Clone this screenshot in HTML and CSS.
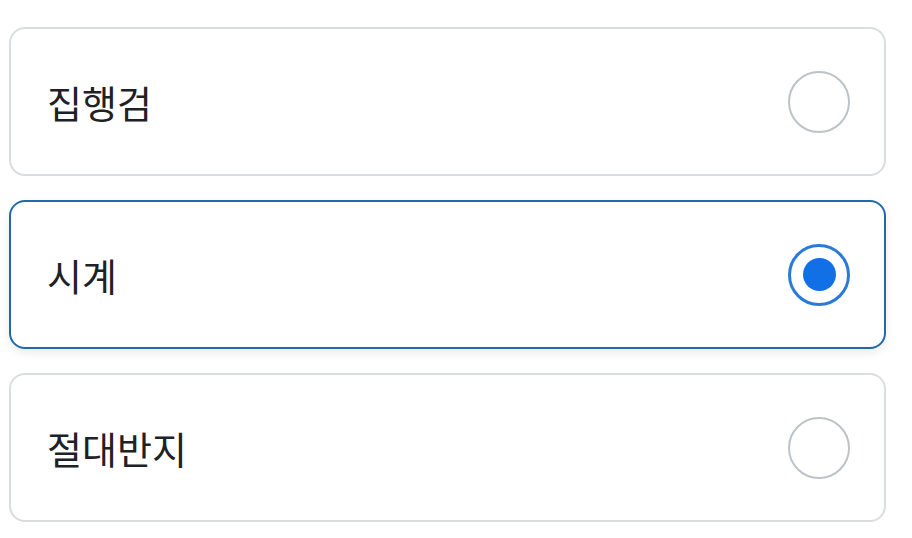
FILE: index.html
```html
<!DOCTYPE html>
<html lang="ko">
<head>
    <meta charset="UTF-8">
    <meta name="viewport" content="width=device-width, initial-scale=1.0">
    <title>선택</title>
    <link rel="stylesheet" href="styles.css">
</head>
<body>
    <div class="options">
        <label class="option">
            <span class="option-label">집행검</span>
            <span class="radio"></span>
        </label>
        <label class="option selected">
            <span class="option-label">시계</span>
            <span class="radio"></span>
        </label>
        <label class="option">
            <span class="option-label">절대반지</span>
            <span class="radio"></span>
        </label>
    </div>
</body>
</html>
```

FILE: styles.css
```css
body {
    margin: 0;
    background: #ffffff;
    font-family: "Noto Sans CJK KR", "Noto Sans", sans-serif;
}
.options {
    display: flex;
    flex-direction: column;
    gap: 24px;
    padding: 27px 26px 0 9px;
}
.option {
    display: flex;
    align-items: center;
    justify-content: space-between;
    height: 149px;
    box-sizing: border-box;
    padding: 0 34px 0 36px;
    border: 2px solid #dadde0;
    border-radius: 16px;
    background: white;
}
.option.selected {
    border-color: #2069ad;
    box-shadow: 0 4px 10px rgba(0, 0, 0, 0.08);
}
.option-label {
    font-size: 38px;
    font-weight: 400;
    color: #202124;
    line-height: 1;
}
.radio {
    width: 62px;
    height: 62px;
    box-sizing: border-box;
    border: 2px solid #bcc3c7;
    border-radius: 50%;
    display: flex;
    align-items: center;
    justify-content: center;
}
.selected .radio {
    border: 3px solid #2a7bd8;
}
.selected .radio::after {
    content: "";
    width: 33px;
    height: 33px;
    border-radius: 50%;
    background: #1170e6;
}
```
